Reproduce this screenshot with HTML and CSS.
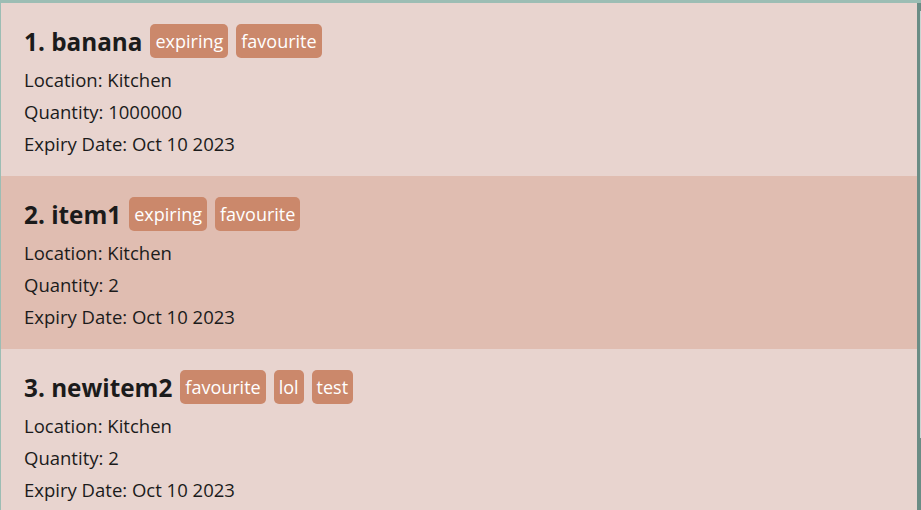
FILE: index.html
```html
<!DOCTYPE html>
<html>
<head>
<meta charset="utf-8">
<link rel="stylesheet" href="styles.css">
</head>
<body>
<div class="frame">
  <div class="list">
    <div class="card">
      <div class="title-row"><span class="name">1. banana</span><span class="tag">expiring</span><span class="tag">favourite</span></div>
      <div class="line">Location: Kitchen</div>
      <div class="line">Quantity: 1000000</div>
      <div class="line">Expiry Date: Oct 10 2023</div>
    </div>
    <div class="card alt">
      <div class="title-row"><span class="name">2. item1</span><span class="tag">expiring</span><span class="tag">favourite</span></div>
      <div class="line">Location: Kitchen</div>
      <div class="line">Quantity: 2</div>
      <div class="line">Expiry Date: Oct 10 2023</div>
    </div>
    <div class="card">
      <div class="title-row"><span class="name">3. newitem2</span><span class="tag">favourite</span><span class="tag">lol</span><span class="tag">test</span></div>
      <div class="line">Location: Kitchen</div>
      <div class="line">Quantity: 2</div>
      <div class="line">Expiry Date: Oct 10 2023</div>
    </div>
  </div>
  <div class="scrollbar"><div class="thumb"></div></div>
</div>
</body>
</html>
```
FILE: styles.css
```css
html, body {
  margin: 0;
  padding: 0;
  height: 100%;
  overflow: hidden;
  background: #9cbdb4;
}
.frame {
  display: flex;
  height: 100%;
  padding: 3px 0 0 1px;
  box-sizing: border-box;
  font-family: "Open Sans", "Noto Sans", sans-serif;
  color: #1b1b1b;
}
.list {
  flex: 1;
  display: flex;
  flex-direction: column;
  overflow: hidden;
}
.card {
  flex: none;
  height: 173px;
  box-sizing: border-box;
  padding: 21px 0 16px 23px;
  background: #e8d4cf;
}
.card.alt {
  background: #e0bdb1;
}
.title-row {
  display: flex;
  align-items: center;
  height: 34px;
  margin-bottom: 6px;
}
.name {
  font-weight: 700;
  font-size: 24.3px;
  margin-right: 8px;
}
.tag {
  display: inline-flex;
  align-items: center;
  height: 34px;
  padding: 0 5px;
  margin-right: 8px;
  box-sizing: border-box;
  background: #cb886b;
  color: #fff;
  border-radius: 5px;
  font-size: 18px;
}
.line {
  height: 32px;
  line-height: 32px;
  font-size: 18.5px;
}
.scrollbar {
  position: relative;
  width: 4px;
  background: #6b8c85;
}
.thumb {
  position: absolute;
  right: 0;
  top: 8px;
  width: 1px;
  height: 427px;
  background: #c9d6d2;
}
```
